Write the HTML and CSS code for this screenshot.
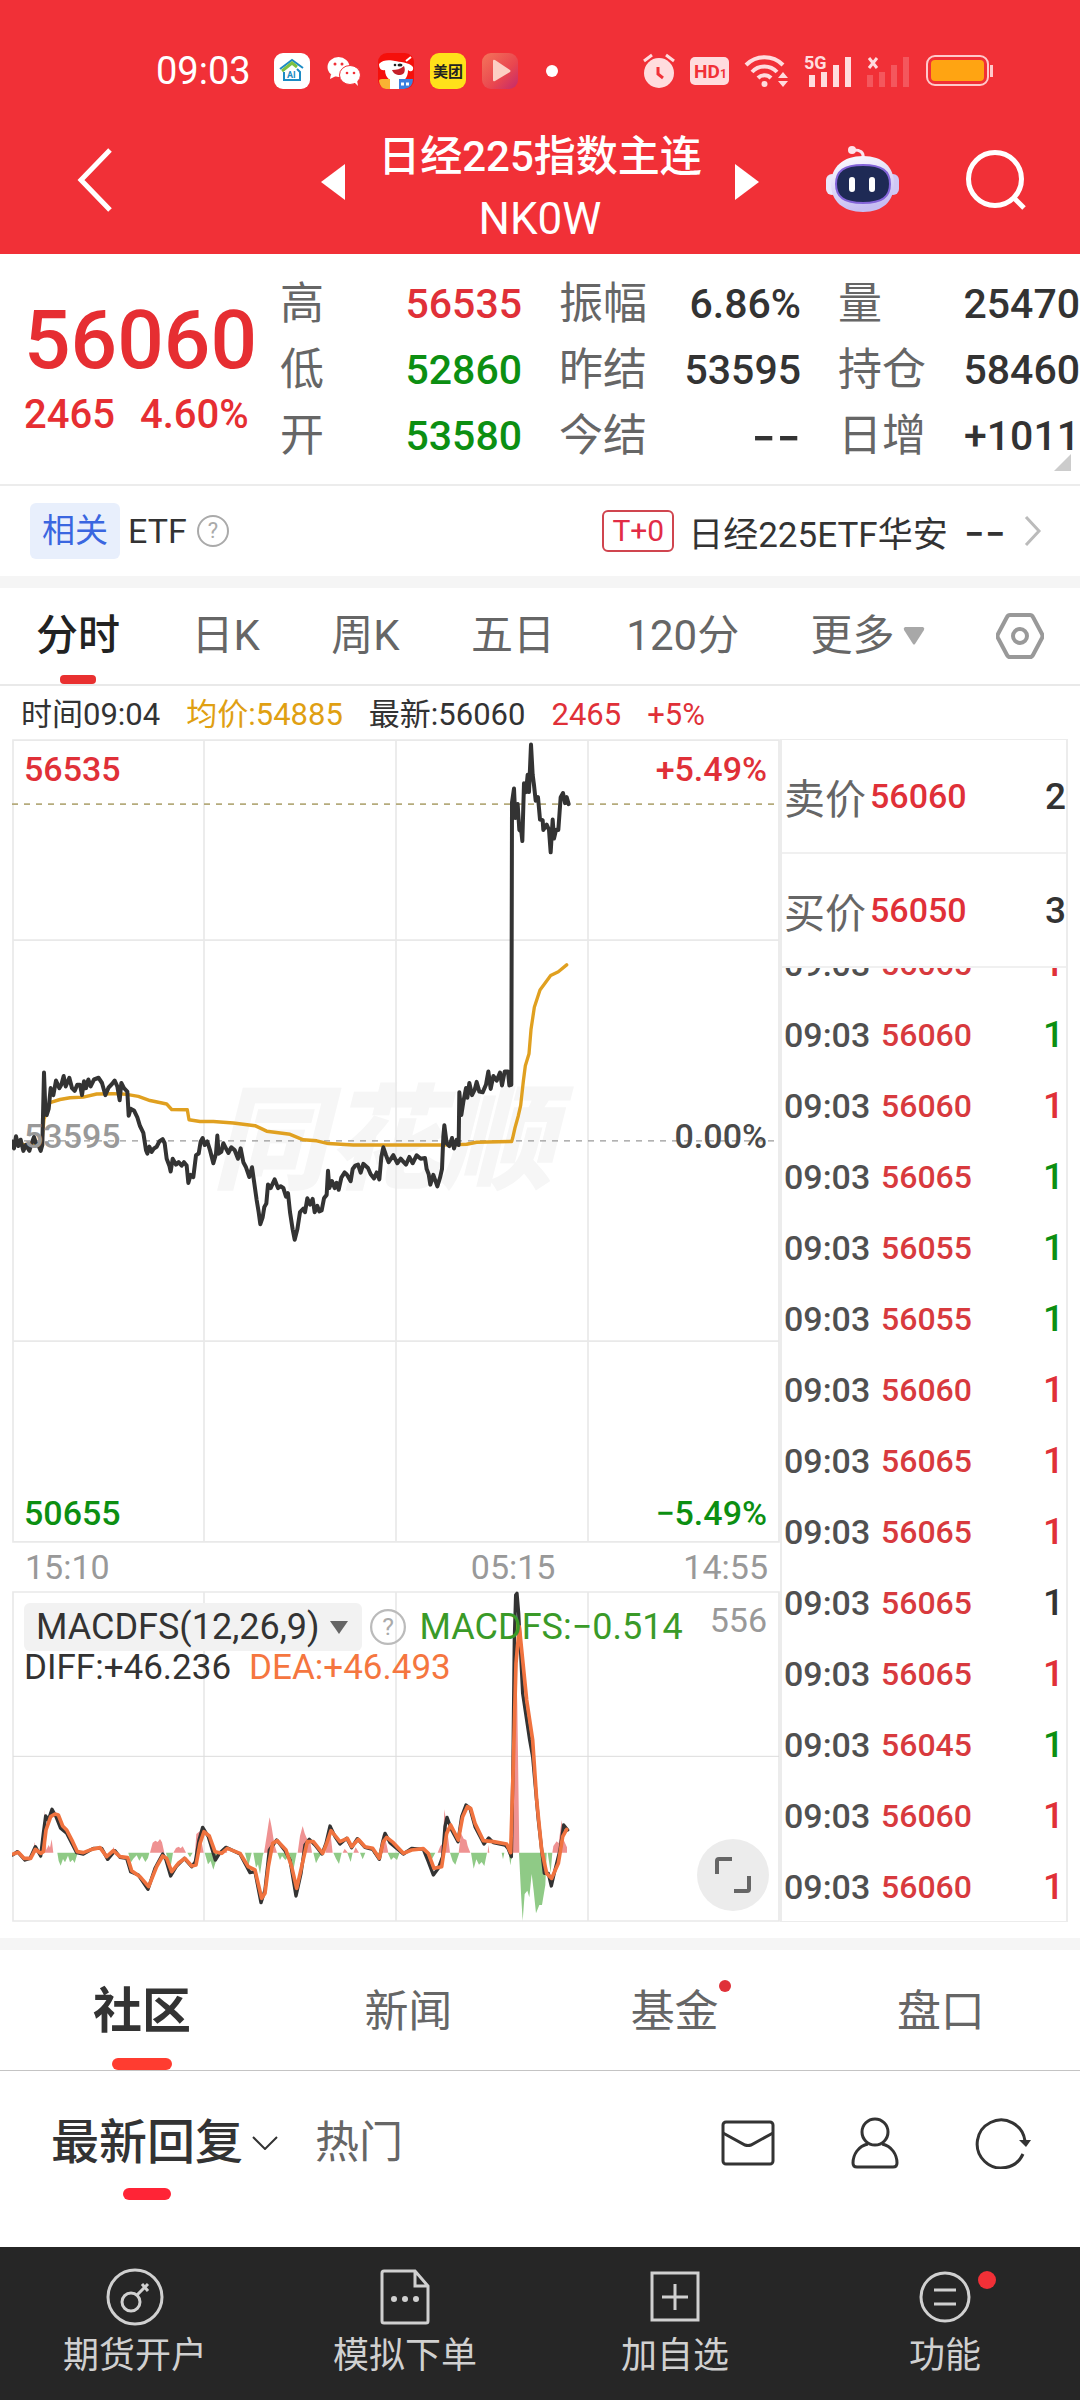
FILE: index.html
```html
<!DOCTYPE html>
<html lang="zh-CN">
<head>
<meta charset="utf-8">
<meta name="viewport" content="width=device-width">
<title>日经225指数主连 NK0W</title>
<link rel="stylesheet" href="styles.css">
</head>
<body>
<header class="top">
  <div class="status">
    <time class="clock">09:03</time>
    <div class="status-apps">
      <svg width="36" height="36" viewBox="0 0 36 36"><rect width="36" height="36" rx="9" fill="#fff"/><path d="M6 16 18 7l11 8" fill="none" stroke="#1d8bc4" stroke-width="2"/><path d="M8 18 18 10l5 4" fill="none" stroke="#7cc142" stroke-width="3"/><path d="M10 19v8h16v-8l-3-3" fill="none" stroke="#1d8bc4" stroke-width="2"/><text x="13" y="25" class="ai-mark">AI</text></svg>
      <svg width="36" height="36" viewBox="0 0 36 36"><ellipse cx="12.500" cy="14" rx="11" ry="10" fill="#fff"/><path d="m5 21-1 5 6-3z" fill="#fff"/><circle cx="9" cy="11" r="1.500" fill="#f13037"/><circle cx="16" cy="11" r="1.500" fill="#f13037"/><ellipse cx="24" cy="22" rx="10.500" ry="9.500" fill="#fff" stroke="#f13037"/><path d="m28 29 4 4-1-6z" fill="#fff"/><circle cx="21" cy="20" r="1.300" fill="#f13037"/><circle cx="28" cy="20" r="1.300" fill="#f13037"/></svg>
      <svg width="36" height="36" viewBox="0 0 36 36"><rect width="36" height="36" rx="9" fill="#f5100b"/><path d="M1 11c4-5 12-4 16-3s14 1 18 6c1 5-3 5-5 3 0 8-4 12-10 12S7 26 7 17c-4 1-6-2-6-6z" fill="#fff"/><path d="M14 17c5 0 8-1 12-4 2 5 0 9-4 9s-7-2-8-5z" fill="#c5202a"/><ellipse cx="22" cy="12" rx="2.500" ry="1.500" fill="#222"/><circle cx="17" cy="12" r="1.300" fill="#222"/><path d="M1 28q0-2 3-2h8v10H8q-6-1-7-8z" fill="#f9b233"/><path d="M12 26h10v10H12z" fill="#fff"/><path d="M21 26h14q0 9-9 10h-5z" fill="#3c80df"/><path d="M23 31h9" stroke="#fff" stroke-width="3" stroke-dasharray="3 2"/><path d="m28 8 5-4" stroke="#fff" stroke-width="2"/></svg>
      <svg width="36" height="36" viewBox="0 0 36 36"><rect width="36" height="36" rx="9" fill="#ffe11a"/><text x="18" y="24" text-anchor="middle" class="mt-mark">美团</text></svg>
      <svg width="36" height="36" viewBox="0 0 36 36"><defs><linearGradient id="play" x2="1" y2="1"><stop offset="0" stop-color="#f4755a"/><stop offset=".6" stop-color="#e9464f"/><stop offset="1" stop-color="#c32a6c"/></linearGradient></defs><rect width="36" height="36" rx="9" fill="url(#play)"/><path d="M11 8q0-2 2-1l15 10q1 1 0 2L13 28q-2 1-2-1z" fill="#fcd0c4"/></svg>
      <span class="more-dot"></span>
    </div>
    <div class="status-system">
      <svg width="32" height="36" viewBox="0 0 32 36"><circle cx="16" cy="20" r="15" fill="#ffdcde"/><path d="m1 8 8-6M31 8l-8-6" stroke="#ffdcde" stroke-width="3"/><path d="M15 14v7l5 4" fill="none" stroke="#f13037" stroke-width="3"/></svg>
      <svg width="39" height="28" viewBox="0 0 39 28"><rect width="39" height="28" rx="5" fill="#ffdcde"/><text x="4" y="21" class="hd-mark">HD</text><text x="30" y="21" class="hd-mark hd-sub">1</text></svg>
      <svg width="45" height="36" viewBox="0 0 45 36"><g fill="none" stroke="#ffdcde" stroke-width="4"><path d="M2 12a26 26 0 0 1 37 0M8 19a17 17 0 0 1 25 0M14 25a9 9 0 0 1 13 0"/></g><circle cx="20.500" cy="31" r="3" fill="#ffdcde"/><path d="m34 25 5-6 5 6zM34 28l5 6 5-6z" fill="#ffdcde"/></svg>
      <svg width="48" height="34" viewBox="0 0 48 34"><path d="M5 21h6v12H5zM17 18h6v15h-6zM29 11h6v22h-6zM41 3h6v30h-6z" fill="#ffdcde"/><text x="0" y="15" class="net-mark">5G</text></svg>
      <svg width="44" height="34" viewBox="0 0 44 34"><path d="M0 21h6v12H0zM12 18h6v15h-6zM24 11h6v22h-6zM36 3h6v30h-6z" fill="#f4575d"/><path d="m2 4 8 10m0-10L2 14" stroke="#ffdcde" stroke-width="3"/></svg>
      <svg width="68" height="32" viewBox="0 0 68 32"><rect x="1" y="1" width="61" height="29" rx="8" fill="none" stroke="#ffc9cb" stroke-width="2"/><rect x="5" y="5" width="53" height="21" rx="4" fill="#ffa412"/><path d="M65.500 10v12" stroke="#ffc9cb" stroke-width="3"/></svg>
    </div>
  </div>
  <div class="titlebar">
    <button class="icon-btn back" aria-label="返回"><svg width="36" height="64" viewBox="0 0 36 64"><path d="M33 2 4 32l29 30" fill="none" stroke="#fff" stroke-width="5"/></svg></button>
    <div class="title-group">
      <button class="icon-btn" aria-label="上一个"><svg width="24" height="36" viewBox="0 0 24 36"><path d="M24 0v36L0 18z" fill="#fff"/></svg></button>
      <h1 class="title">日经225指数主连<span class="code">NK0W</span></h1>
      <button class="icon-btn" aria-label="下一个"><svg width="24" height="36" viewBox="0 0 24 36"><path d="M0 0v36l24-18z" fill="#fff"/></svg></button>
    </div>
    <div class="title-actions">
      <button class="icon-btn" aria-label="智能助手"><svg width="74" height="68" viewBox="0 0 74 68"><defs><linearGradient id="head" x2=".3" y2="1"><stop offset="0" stop-color="#fff"/><stop offset="1" stop-color="#c6bdf2"/></linearGradient></defs><path d="M37 12c1-6-3-8-9-8" fill="none" stroke="#fbe4ee" stroke-width="3"/><circle cx="26" cy="4" r="4" fill="#ffe3ea"/><rect y="28" width="12" height="21" rx="6" fill="#e9e7fb"/><rect x="61" y="28" width="12" height="21" rx="6" fill="#cfc8f5"/><path d="M37 10c20 0 31 11 31 28S57 66 37 66 5 55 5 38s12-28 32-28z" fill="url(#head)"/><path d="M37 19c19 0 27 6 27 19s-8 19-27 19-27-6-27-19 8-19 27-19z" fill="#1e2a55" stroke="#8364d8" stroke-width="2"/><path d="M26 34v9M46 34v9" stroke="#fff" stroke-width="6" stroke-linecap="round"/></svg></button>
      <button class="icon-btn" aria-label="搜索"><svg width="60" height="62" viewBox="0 0 60 62"><circle cx="29" cy="30" r="26.500" fill="none" stroke="#fff" stroke-width="5"/><path d="m47 48 11 11" stroke="#fff" stroke-width="5"/></svg></button>
    </div>
  </div>
</header>

<main>
  <section class="quote">
    <div class="last">
      <strong class="price">56060</strong>
      <div class="change"><span>2465</span><span>4.60%</span></div>
    </div>
    <dl class="stats">
      <div><dt>高</dt><dd class="up">56535</dd></div>
      <div><dt>振幅</dt><dd>6.86%</dd></div>
      <div><dt>量</dt><dd>25470</dd></div>
      <div><dt>低</dt><dd class="down">52860</dd></div>
      <div><dt>昨结</dt><dd>53595</dd></div>
      <div><dt>持仓</dt><dd>58460</dd></div>
      <div><dt>开</dt><dd class="down">53580</dd></div>
      <div><dt>今结</dt><dd class="dashes">--</dd></div>
      <div><dt>日增</dt><dd>+1011</dd></div>
    </dl>
    <span class="corner"></span>
  </section>

  <section class="related">
    <span class="tag">相关</span>
    <span>ETF</span>
    <svg class="help" width="32" height="32" viewBox="0 0 32 32"><circle cx="16" cy="16" r="15" fill="none" stroke="#aaa" stroke-width="2"/><text x="16" y="23" text-anchor="middle" class="q-mark">?</text></svg>
    <a class="fund" href="#fund"><span class="t0">T+0</span><span>日经225ETF华安</span><span class="dashes">--</span>
      <svg width="18" height="32" viewBox="0 0 18 32"><path d="m2 2 13 14L2 30" fill="none" stroke="#bbb" stroke-width="3"/></svg></a>
  </section>

  <nav class="periods">
    <button class="period active">分时</button>
    <button class="period">日K</button>
    <button class="period">周K</button>
    <button class="period">五日</button>
    <button class="period">120分</button>
    <button class="period more">更多<svg width="22" height="18" viewBox="0 0 22 18"><path d="M2 0h18q2 1 1 3L12 17q-1 1-2 0L1 3Q0 1 2 0z" fill="#a8a8a8"/></svg></button>
    <button class="period" aria-label="设置"><svg width="48" height="46" viewBox="0 0 48 46"><path d="M14 2h20q2 0 3 2l9 17q1 2 0 4l-9 17q-1 2-3 2H14q-2 0-3-2L2 25q-1-2 0-4l9-17q1-2 3-2z" fill="none" stroke="#999" stroke-width="4"/><circle cx="24" cy="23" r="7" fill="none" stroke="#999" stroke-width="4"/></svg></button>
  </nav>

  <section class="market">
    <p class="readout"><span>时间09:04</span><span class="avg">均价:54885</span><span>最新:56060</span><span class="up">2465</span><span class="up">+5%</span></p>
    <div class="panels">
      <div class="charts">
        <figure class="chart price-chart">
          <span class="watermark">同花顺</span>
          <svg class="plot" viewBox="36 26 2304 2335" preserveAspectRatio="none" role="img" aria-label="分时走势">
            <g fill="none" stroke="#e9e9e9" stroke-width="5"><path d="M39 29H2337V2358H39zM39 610H2337M39 1775H2337M612 29V2358M1188 29V2358M1764 29V2358"/></g>
            <path d="M36 215H2325" stroke="#b5ab7c" stroke-width="5" stroke-dasharray="18 18"/>
            <path d="M36 1193H2325" stroke="#999" stroke-width="4" stroke-dasharray="18 18"/>
            <polyline class="avg-line" points="38,1200 80,1205 125,1205 132,1130 150,1082 180,1073 210,1068 250,1066 290,1057 340,1056 380,1058 415,1064 450,1076 500,1086 515,1102 562,1103 567,1132 600,1137 640,1137 700,1141 765,1149 800,1165 870,1174 910,1190 950,1193 985,1201 1060,1205 1325,1205 1400,1203 1430,1197 1535,1195 1538,1185 1545,1155 1555,1120 1562,1090 1570,1020 1576,975 1587,940 1593,870 1603,805 1620,755 1652,713 1675,702 1700,682"/>
            <polyline class="price-line" points="38,1195 42,1215 48,1180 55,1208 62,1190 70,1222 78,1205 88,1222 95,1200 102,1182 108,1200 115,1205 122,1222 127,1205 132,995 136,1100 140,1118 146,1100 152,1040 160,1060 168,1018 178,1040 184,1030 191,1005 197,1035 208,1010 216,1040 224,1048 232,1030 240,1030 246,1060 252,1020 258,1040 265,1015 272,1035 282,1015 296,1010 306,1025 316,1060 326,1038 336,1028 344,1018 352,1035 359,1075 364,1025 372,1040 382,1050 386,1120 392,1100 402,1105 412,1125 420,1150 430,1170 438,1220 442,1230 448,1210 455,1225 462,1215 470,1210 478,1195 488,1188 494,1200 500,1245 508,1265 512,1282 518,1245 528,1262 536,1255 545,1265 552,1255 560,1265 565,1315 572,1292 580,1298 588,1235 596,1230 602,1195 608,1185 614,1205 622,1195 630,1220 640,1258 648,1230 652,1178 656,1230 664,1225 670,1200 678,1215 685,1228 694,1212 704,1220 714,1245 722,1215 730,1255 738,1270 748,1298 756,1270 762,1310 770,1365 776,1400 781,1435 788,1415 793,1385 799,1375 804,1320 812,1330 824,1305 834,1330 842,1325 850,1330 858,1355 864,1345 870,1400 878,1450 884,1480 892,1450 900,1400 910,1390 915,1400 922,1360 930,1378 938,1362 944,1400 952,1382 958,1398 965,1395 972,1360 980,1350 984,1280 988,1330 996,1310 1004,1330 1010,1315 1016,1335 1024,1300 1034,1285 1040,1290 1052,1310 1058,1275 1066,1265 1074,1262 1082,1285 1090,1260 1104,1272 1112,1290 1122,1302 1130,1285 1138,1305 1144,1240 1150,1212 1158,1235 1166,1255 1180,1235 1192,1258 1202,1245 1218,1262 1228,1240 1238,1258 1250,1235 1262,1245 1275,1243 1280,1275 1286,1290 1291,1320 1300,1292 1312,1325 1320,1300 1326,1275 1330,1180 1333,1148 1340,1200 1348,1208 1356,1185 1362,1215 1370,1190 1376,1205 1378,1052 1384,1118 1390,1080 1398,1040 1402,1068 1408,1025 1416,1060 1424,1045 1430,1022 1438,1050 1448,1052 1458,1030 1465,992 1472,1042 1480,1005 1490,1018 1500,995 1506,1032 1514,992 1524,992 1528,1032 1534,1030 1536,210 1542,170 1546,255 1553,215 1558,290 1564,295 1567,322 1572,155 1578,180 1583,130 1587,180 1593,42 1598,130 1602,160 1607,205 1614,195 1620,260 1628,262 1630,290 1640,275 1647,290 1652,355 1658,260 1662,315 1668,290 1675,290 1682,195 1689,183 1695,212 1700,195 1706,215"/>
          </svg>
          <figcaption class="scale">
            <div class="scale-row"><span class="up">56535</span><span class="up">+5.49%</span></div>
            <div class="scale-row center"><span class="muted">53595</span><span class="mid">0.00%</span></div>
            <div class="scale-row"><span class="down">50655</span><span class="down">−5.49%</span></div>
          </figcaption>
        </figure>
        <div class="times"><time>15:10</time><time>05:15</time><time>14:55</time></div>
        <figure class="chart macd-chart">
          <svg class="plot" viewBox="36 333 2304 993" preserveAspectRatio="none" role="img" aria-label="MACD">
            <g fill="none" stroke="#e9e9e9" stroke-width="5"><path d="M39 336H2337V1323H39zM612 336V1323M1188 336V1323M1764 336V1323"/></g>
            <path d="M39 829H2337" stroke="#ddd" stroke-width="3"/>
            <path fill="#ef9292" d="M100 1118l4-32 6 32zM130 1118l4-130 5 122 7-15 4 8 5-25 5 40zM335 1118l5-17 8 17zM450 1118l8-30 8-6 7 4 7-9 6 10 7 31zM520 1118l8-14 8-4 6 5 6-6 10 19zM585 1118l4-56 10-8 12 64zM665 1118l10-14 7 14zM792 1118l8-50 6-40 3-16 6 30 8 50 8 26zM893 1118l7-50 8-30 6 22 6 14 12 18 4 26zM976 1118l8-55 5-23 9 78zM1028 1118l6-12 10 12zM1060 1118l7-16 10 16zM1142 1118l7-58 8 20 8 38zM1313 1118l8-20 8-8 4-102 5 32 12 98zM1376 1118l7-58 8 16 8 4 4 18 8 20zM1463 1118l2-24 3 24zM1530 1118l8-260 8-410 6 230 6 440zM1657 1118l3-20 10-14 6 6 9-70 6 60 10 22v16z"/>
            <path fill="#8fca86" d="M115 1118l6 18 5-18zM172 1118l4 25 6 14 7-20 6 10 9-20 6 20 8-8 6 10 6-20 3-11zM385 1118l7 30 8-12 10-10 8 16 8-14 10 18 8-12 4-16zM498 1118l5 20 8 28 8-48zM562 1118l8 14 8-14zM614 1118l10 35 8-10 8 26 10-32 8-19zM735 1118l10 40 10-40zM760 1118l8 45 6-10 6 30 8-55 3-10zM832 1118l8 22 6-12 10 12 8-8 12 60 14-74zM940 1118l8 32 8-16 10-16zM1000 1118l8 18 9 16 8-34zM1042 1118l10 28 6-28zM1080 1118l8 20 8-20zM1118 1118l18 20 8-20zM1163 1118l10 22 8-8 10 8 8-22zM1278 1118l12 30 16-30zM1350 1118l8 26 8 10 12-36zM1413 1118l8 48 8-28 8 16 8-8 8 12 8-40zM1505 1118l4 20 4-20zM1526 1118l5 38 6-38zM1557 1118l6 122 5 82 6-80 8-10 6 20 7-70 6 50 7 68 10-25 8 0 10-60 4-97zM1643 1118l9 60 5-60z"/>
            <polyline class="diff-line" points="38,1125 52,1115 75,1140 90,1135 106,1100 122,1128 130,1060 137,1008 145,1020 156,988 168,1010 182,1045 200,1060 230,1118 250,1122 280,1105 305,1105 323,1138 345,1112 360,1132 380,1135 392,1175 415,1185 444,1228 465,1165 488,1122 498,1140 512,1188 530,1158 553,1135 575,1160 586,1145 597,1080 608,1042 625,1070 646,1140 660,1118 678,1102 720,1122 750,1178 765,1175 783,1268 795,1230 808,1110 830,1080 855,1112 870,1140 888,1248 903,1180 915,1095 928,1078 945,1095 966,1122 978,1090 990,1038 1005,1070 1020,1092 1040,1075 1055,1103 1072,1076 1095,1102 1118,1108 1138,1138 1148,1085 1155,1060 1170,1088 1210,1122 1235,1105 1270,1108 1285,1145 1300,1185 1315,1165 1328,1130 1335,1040 1341,1012 1355,1050 1374,1085 1385,1010 1398,975 1410,985 1425,1040 1452,1092 1466,1074 1480,1088 1515,1095 1524,1105 1534,1130 1539,850 1543,480 1547,345 1551,340 1556,400 1568,640 1580,720 1589,780 1598,830 1615,1020 1633,1180 1645,1180 1654,1218 1665,1170 1680,1110 1691,1035 1703,1050"/>
            <polyline class="dea-line" points="40,1122 55,1117 72,1135 92,1135 106,1108 122,1120 130,1115 138,1050 152,1010 165,1002 175,1005 188,1038 200,1050 218,1085 232,1115 250,1118 275,1108 300,1103 320,1130 340,1112 360,1130 383,1133 395,1172 420,1190 446,1220 470,1160 488,1128 500,1135 515,1175 535,1150 555,1135 575,1158 588,1155 600,1090 612,1055 628,1068 645,1115 665,1120 682,1105 720,1120 745,1160 765,1170 785,1255 795,1240 805,1160 818,1090 832,1082 858,1110 875,1160 890,1225 905,1160 922,1085 940,1085 968,1120 980,1090 993,1052 1020,1085 1042,1075 1055,1100 1075,1078 1095,1100 1118,1105 1138,1135 1150,1085 1160,1072 1180,1088 1210,1120 1235,1110 1270,1106 1285,1120 1302,1165 1325,1160 1340,1060 1352,1035 1375,1080 1388,1010 1402,980 1412,985 1425,1030 1450,1082 1480,1085 1520,1092 1532,1118 1540,850 1548,550 1558,440 1568,540 1580,660 1598,780 1610,960 1625,1110 1640,1180 1655,1195 1675,1150 1688,1070 1700,1048"/>
          </svg>
          <figcaption class="legend">
            <div class="legend-row">
              <button class="indicator">MACDFS(12,26,9)<svg width="18" height="13" viewBox="0 0 18 13"><path d="M0 0h18L9 13z" fill="#666"/></svg></button>
              <svg class="legend-help" width="36" height="36" viewBox="0 0 32 32"><circle cx="16" cy="16" r="15" fill="none" stroke="#bbb" stroke-width="2"/><text x="16" y="23" text-anchor="middle" class="q-mark">?</text></svg>
              <span class="macd-value">MACDFS:−0.514</span>
              <span class="macd-max">556</span>
            </div>
            <div class="legend-values"><span>DIFF:+46.236</span><span class="dea">DEA:+46.493</span></div>
          </figcaption>
          <button class="expand" aria-label="全屏"><svg width="38" height="38" viewBox="0 0 38 38"><path d="M3 18V5q0-2 2-2h13M35 20v13q0 2-2 2H20" fill="none" stroke="#666" stroke-width="4"/></svg></button>
        </figure>
      </div>
      <aside class="book">
        <div class="level"><span class="side">卖价</span><span class="up">56060</span><b>2</b></div>
        <div class="level"><span class="side">买价</span><span class="up">56050</span><b>3</b></div>
        <div class="ticks">
          <table>
            <tbody>
              <tr><td>09:03</td><td>56065</td><td class="up">1</td></tr>
              <tr><td>09:03</td><td>56060</td><td class="down">1</td></tr>
              <tr><td>09:03</td><td>56060</td><td class="up">1</td></tr>
              <tr><td>09:03</td><td>56065</td><td class="down">1</td></tr>
              <tr><td>09:03</td><td>56055</td><td class="down">1</td></tr>
              <tr><td>09:03</td><td>56055</td><td class="down">1</td></tr>
              <tr><td>09:03</td><td>56060</td><td class="up">1</td></tr>
              <tr><td>09:03</td><td>56065</td><td class="up">1</td></tr>
              <tr><td>09:03</td><td>56065</td><td class="up">1</td></tr>
              <tr><td>09:03</td><td>56065</td><td>1</td></tr>
              <tr><td>09:03</td><td>56065</td><td class="up">1</td></tr>
              <tr><td>09:03</td><td>56045</td><td class="down">1</td></tr>
              <tr><td>09:03</td><td>56060</td><td class="up">1</td></tr>
              <tr><td>09:03</td><td>56060</td><td class="up">1</td></tr>
            </tbody>
          </table>
        </div>
      </aside>
    </div>
  </section>

  <nav class="sections">
    <a class="section-tab active" href="#community">社区</a>
    <a class="section-tab" href="#news">新闻</a>
    <a class="section-tab" href="#funds"><span class="badged">基金</span></a>
    <a class="section-tab" href="#depth">盘口</a>
  </nav>

  <section class="community">
    <button class="sort active">最新回复<svg width="26" height="14" viewBox="0 0 26 14"><path d="m1 1 12 12L25 1" fill="none" stroke="#333" stroke-width="2"/></svg></button>
    <button class="sort">热门</button>
    <div class="community-actions">
      <button class="icon-btn" aria-label="消息"><svg width="54" height="46" viewBox="0 0 54 46"><rect x="2" y="2" width="50" height="42" rx="3" fill="none" stroke="#333" stroke-width="3"/><path d="m2 13 22 12q3 1 6 0l22-12" fill="none" stroke="#333" stroke-width="3"/></svg></button>
      <button class="icon-btn" aria-label="我的"><svg width="48" height="52" viewBox="0 0 48 52"><g fill="none" stroke="#333" stroke-width="3"><circle cx="24" cy="15" r="13"/><path d="M17 27C7 29 2 38 2 46q0 4 4 4h36q4 0 4-4c0-8-5-17-15-19"/></g></svg></button>
      <button class="icon-btn" aria-label="刷新"><svg width="56" height="52" viewBox="0 0 56 52"><path d="M48 37A24 24 0 1 1 50 24" fill="none" stroke="#333" stroke-width="3"/><path d="M44 23h12l-5 7z" fill="#333"/></svg></button>
    </div>
  </section>
</main>

<nav class="dock">
  <a href="#open"><svg width="58" height="58" viewBox="0 0 58 58"><g fill="none" stroke="#d0d0d0" stroke-width="3"><circle cx="29" cy="29" r="27"/><circle cx="25" cy="34" r="9"/><path d="m31 27 11-11M36 16l6 7"/></g></svg>期货开户</a>
  <a href="#paper"><svg width="50" height="58" viewBox="0 0 50 58"><path d="M35 3H4q-2 0-2 2v48q0 2 2 2h42q2 0 2-2V18zv15h13" fill="none" stroke="#d0d0d0" stroke-width="3"/><g fill="#d0d0d0"><circle cx="14" cy="31" r="3"/><circle cx="25" cy="31" r="3"/><circle cx="36" cy="31" r="3"/></g></svg>模拟下单</a>
  <a href="#watch"><svg width="50" height="58" viewBox="0 0 50 58"><path d="M2 5h46v47H2zM25 16v26M12 29h26" fill="none" stroke="#d0d0d0" stroke-width="3"/></svg>加自选</a>
  <a href="#tools"><svg width="52" height="58" viewBox="0 0 52 58"><circle cx="26" cy="29" r="24" fill="none" stroke="#d0d0d0" stroke-width="3"/><path d="M15 22h22M15 36h22" stroke="#d0d0d0" stroke-width="3"/></svg>功能<span class="dock-dot"></span></a>
</nav>
</body>
</html>
```
FILE: styles.css
```css
* { box-sizing: border-box; }
body {
  margin: 0;
  min-height: 100vh;
  display: flex;
  flex-direction: column;
  background: #fff;
  color: #333;
  font-family: Roboto, "Noto Sans CJK SC", sans-serif;
  font-size: 34px;
}
button {
  border: 0;
  padding: 0;
  background: none;
  color: inherit;
  font: inherit;
}
a { color: inherit; text-decoration: none; }
svg { display: block; flex: none; }
figure, h1, p, dl, dd { margin: 0; }
main { flex: 1; display: flex; flex-direction: column; }

.up { color: #e03038; }
.down { color: #0c8f12; }
.avg { color: #e0a012; }
.dashes { font-family: Inter, sans-serif; }
.q-mark { font-size: 22px; fill: #aaa; }

/* header */
.top { background: #f13037; color: #fff; }
.status {
  height: 126px;
  padding: 16px 86px 0 156px;
  display: flex;
  align-items: center;
}
.clock { font-size: 38px; width: 118px; }
.status-apps { display: flex; align-items: center; gap: 16px; }
.more-dot {
  width: 12px;
  height: 12px;
  margin-left: 12px;
  border-radius: 50%;
  background: #fff;
}
.status-system {
  margin-left: auto;
  display: flex;
  align-items: center;
  gap: 15px;
}
.ai-mark { font-size: 9px; font-weight: 700; fill: #1d8bc4; }
.mt-mark { font-size: 15px; font-weight: 700; fill: #222; }
.hd-mark { font-size: 19px; font-weight: 700; fill: #f13037; }
.hd-sub { font-size: 12px; }
.net-mark { font-size: 18px; font-weight: 700; fill: #ffdcde; }

.titlebar {
  display: grid;
  grid-template-columns: 1fr auto 1fr;
  align-items: center;
  padding-bottom: 4px;
}
.icon-btn { display: block; }
.back { padding: 0 0 16px 77px; }
.title-group { display: flex; align-items: center; width: 438px; }
.title-group .icon-btn { padding-bottom: 12px; }
.title {
  flex: 1;
  font-size: 42px;
  font-weight: 500;
  line-height: 62px;
  text-align: center;
  white-space: nowrap;
}
.code { display: block; font-size: 44px; font-weight: 400; }
.title-actions {
  display: flex;
  align-items: center;
  justify-content: flex-end;
  gap: 66px;
  padding: 0 54px 16px 0;
}

/* quote */
.quote {
  position: relative;
  display: flex;
  border-bottom: 2px solid #ececec;
  overflow: hidden;
}
.last { flex: none; width: 280px; padding: 44px 0 0 24px; color: #e62e32; }
.price { display: block; font-size: 82px; font-weight: 500; line-height: 84px; }
.change { display: flex; gap: 25px; font-size: 40px; font-weight: 500; line-height: 66px; }
.stats {
  flex: 1;
  display: grid;
  grid-template-columns: repeat(3, 1fr);
  column-gap: 37px;
  padding: 17px 0 15px;
  line-height: 66px;
}
.stats div { display: flex; justify-content: space-between; height: 66px; }
.stats dt { font-size: 44px; color: #666; }
.stats dd { font-size: 41px; font-weight: 500; }
.stats .dashes { font-size: 54px; font-weight: 400; }
.corner {
  position: absolute;
  right: 9px;
  bottom: 13px;
  border-left: 17px solid transparent;
  border-bottom: 17px solid #ccc;
}

/* related ETF */
.related {
  display: flex;
  align-items: center;
  height: 90px;
  padding: 0 38px 0 30px;
}
.tag {
  margin-right: 8px;
  padding: 0 12px;
  border-radius: 6px;
  background: #e8effc;
  color: #3a66e0;
  font-size: 33px;
  line-height: 56px;
}
.help { margin-left: 10px; }
.fund { margin-left: auto; display: flex; align-items: center; font-size: 35px; }
.t0 {
  margin-right: 14px;
  padding: 0 8px;
  border: 2px solid #d0454f;
  border-radius: 6px;
  color: #e22c46;
  font-size: 30px;
  line-height: 38px;
}
.fund .dashes { margin: 0 18px 0 16px; font-size: 46px; line-height: 40px; }

/* chart periods */
.periods {
  display: flex;
  justify-content: space-between;
  align-items: center;
  height: 110px;
  padding: 0 36px;
  border-top: 12px solid #f5f5f5;
  border-bottom: 2px solid #e9e9e9;
  font-size: 42px;
  color: #666;
}
.period { position: relative; line-height: 96px; }
.period.active { color: #222; font-weight: 500; }
.period.active::after {
  content: "";
  position: absolute;
  left: 50%;
  bottom: 0;
  width: 36px;
  height: 9px;
  margin-left: -18px;
  border-radius: 4px;
  background: #e93030;
}
.more { display: flex; align-items: center; gap: 8px; }

/* market */
.market { padding: 0 12px 16px; }
.readout {
  display: flex;
  gap: 26px;
  height: 53px;
  padding-left: 9px;
  font-size: 31px;
  line-height: 58px;
}
.panels { display: flex; }
.charts { flex: 1; min-width: 0; }
.chart { position: relative; }
.plot { position: relative; width: 100%; height: 100%; }
.price-chart { height: 804px; }
.macd-chart { height: 331px; }
.watermark {
  position: absolute;
  left: 200px;
  top: 50%;
  margin-top: -64px;
  color: #f6f6f6;
  font-size: 114px;
  font-weight: 900;
  font-style: italic;
  line-height: 128px;
}
.avg-line, .price-line, .diff-line, .dea-line { fill: none; stroke-linejoin: round; stroke-linecap: round; }
.avg-line { stroke: #e0a020; stroke-width: 10; }
.price-line { stroke: #333; stroke-width: 12; }
.diff-line { stroke: #333; stroke-width: 10; }
.dea-line { stroke: #f0733f; stroke-width: 11; }
.scale {
  position: absolute;
  inset: 10px 13px 10px 12px;
  display: flex;
  flex-direction: column;
  justify-content: space-between;
  font-weight: 500;
  line-height: 40px;
}
.scale-row { display: flex; justify-content: space-between; }
.scale-row.center { padding-bottom: 10px; }
.scale .muted { color: #999; }
.mid { color: #4a4a4a; }
.times {
  display: grid;
  grid-template-columns: 60% 1fr auto;
  padding: 0 12px 0 13px;
  color: #999;
  line-height: 48px;
}
.legend { position: absolute; inset: 12px 13px auto 12px; }
.legend-row { display: flex; align-items: center; height: 48px; }
.indicator {
  display: flex;
  align-items: center;
  gap: 10px;
  padding: 0 14px 0 12px;
  border-radius: 6px;
  background: #f2f2f2;
  font-size: 36px;
  line-height: 48px;
}
.legend-help { margin: 0 14px 0 8px; }
.macd-value { color: #3a9a28; font-size: 36px; }
.macd-max { margin: -14px 0 0 auto; color: #999; }
.legend-values { display: flex; gap: 18px; font-size: 35px; line-height: 34px; }
.dea { color: #f5763f; }
.expand {
  position: absolute;
  right: 11px;
  bottom: 11px;
  width: 72px;
  height: 72px;
  display: grid;
  place-items: center;
  border-radius: 50%;
  background: #ececec;
}

.book {
  flex: none;
  width: 288px;
  display: flex;
  flex-direction: column;
  border: solid #ececec;
  border-width: 1px 2px;
}
.level {
  display: flex;
  align-items: center;
  height: 114px;
  padding: 0 0 0 2px;
  border-bottom: 2px solid #f0f0f0;
  font-weight: 500;
}
.side { margin-right: 4px; color: #666; font-size: 41px; font-weight: 400; }
.level b { margin-left: auto; font-size: 37px; font-weight: 500; }
.ticks {
  flex: 1 1 0;
  min-height: 0;
  display: flex;
  flex-direction: column;
  justify-content: flex-end;
  overflow: hidden;
}
.ticks table { width: 100%; border-collapse: collapse; font-weight: 500; }
.ticks td { height: 71px; padding: 2px 0 0; line-height: 40px; }
.ticks td:first-child { width: 99px; padding-left: 2px; color: #505050; }
.ticks td:nth-child(2) { color: #d83a3e; font-size: 32px; }
.ticks td:last-child { padding-right: 2px; text-align: right; font-size: 37px; }

/* section tabs */
.sections {
  display: grid;
  grid-template-columns: repeat(4, 1fr);
  height: 133px;
  padding: 0 6px 0 9px;
  border-top: 12px solid #f5f5f5;
  border-bottom: 1px solid #c4c4c4;
  font-size: 44px;
  color: #666;
}
.section-tab { position: relative; line-height: 124px; text-align: center; }
.section-tab.active { height: 120px; color: #333; font-size: 49px; font-weight: 700; }
.section-tab.active::after, .sort.active::after {
  content: "";
  position: absolute;
  height: 12px;
  border-radius: 6px;
}
.section-tab.active::after { left: 50%; bottom: 0; width: 60px; margin-left: -30px; background: #ff3c30; }
.badged { position: relative; }
.badged::after {
  content: "";
  position: absolute;
  top: -6px;
  right: -12px;
  width: 12px;
  height: 12px;
  border-radius: 50%;
  background: #e03038;
}

/* community toolbar */
.community {
  display: flex;
  align-items: center;
  height: 144px;
  padding: 0 49px 0 51px;
}
.sort { position: relative; color: #666; font-size: 44px; line-height: 60px; }
.sort.active {
  display: flex;
  align-items: center;
  gap: 9px;
  margin-right: 37px;
  color: #333;
  font-size: 48px;
  font-weight: 500;
}
.sort.active::after { left: 72px; bottom: -27px; width: 48px; background: #ff2436; }
.community-actions { margin-left: auto; display: flex; align-items: center; gap: 76px; }

/* bottom dock */
.dock {
  display: grid;
  grid-template-columns: repeat(4, 1fr);
  height: 153px;
  background: #262626;
  color: #d0d0d0;
  font-size: 36px;
}
.dock a {
  position: relative;
  display: flex;
  flex-direction: column;
  align-items: center;
  padding-top: 21px;
  line-height: 60px;
}
.dock-dot {
  position: absolute;
  top: 24px;
  left: 50%;
  width: 18px;
  height: 18px;
  margin-left: 33px;
  border-radius: 50%;
  background: #f13037;
}
```
